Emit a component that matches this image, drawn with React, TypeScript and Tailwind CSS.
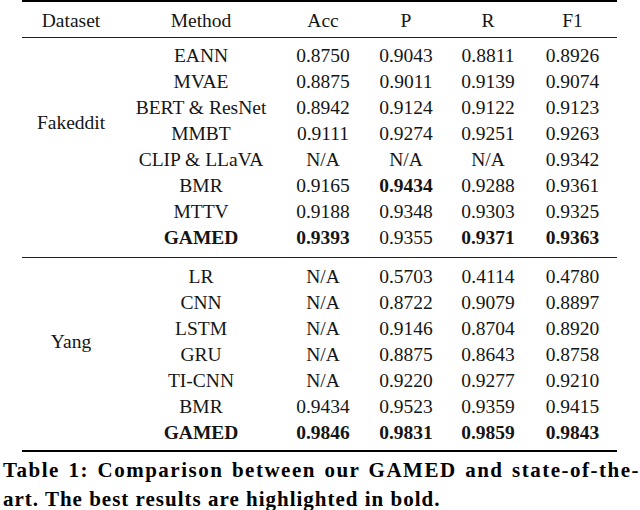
import React from 'react';

type Row = { method: string; vals: string[]; bold: boolean[] };

const fakeddit: Row[] = [
  { method: 'EANN', vals: ['0.8750', '0.9043', '0.8811', '0.8926'], bold: [false, false, false, false] },
  { method: 'MVAE', vals: ['0.8875', '0.9011', '0.9139', '0.9074'], bold: [false, false, false, false] },
  { method: 'BERT & ResNet', vals: ['0.8942', '0.9124', '0.9122', '0.9123'], bold: [false, false, false, false] },
  { method: 'MMBT', vals: ['0.9111', '0.9274', '0.9251', '0.9263'], bold: [false, false, false, false] },
  { method: 'CLIP & LLaVA', vals: ['N/A', 'N/A', 'N/A', '0.9342'], bold: [false, false, false, false] },
  { method: 'BMR', vals: ['0.9165', '0.9434', '0.9288', '0.9361'], bold: [false, true, false, false] },
  { method: 'MTTV', vals: ['0.9188', '0.9348', '0.9303', '0.9325'], bold: [false, false, false, false] },
];

const yang: Row[] = [
  { method: 'LR', vals: ['N/A', '0.5703', '0.4114', '0.4780'], bold: [false, false, false, false] },
  { method: 'CNN', vals: ['N/A', '0.8722', '0.9079', '0.8897'], bold: [false, false, false, false] },
  { method: 'LSTM', vals: ['N/A', '0.9146', '0.8704', '0.8920'], bold: [false, false, false, false] },
  { method: 'GRU', vals: ['N/A', '0.8875', '0.8643', '0.8758'], bold: [false, false, false, false] },
  { method: 'TI-CNN', vals: ['N/A', '0.9220', '0.9277', '0.9210'], bold: [false, false, false, false] },
  { method: 'BMR', vals: ['0.9434', '0.9523', '0.9359', '0.9415'], bold: [false, false, false, false] },
];

const gridCols = 'grid grid-cols-[98px_162px_82px_84px_80px_89px]';

const BodyRow = ({ row, strongMethod }: { row: Row; strongMethod?: boolean }) => (
  <>
    <div className={`col-start-2 h-[26px] text-center ${strongMethod ? 'font-bold' : ''}`}>{row.method}</div>
    {row.vals.map((v, i) => (
      <div key={i} className={`h-[26px] text-center ${row.bold[i] ? 'font-bold' : ''}`}>
        {v}
      </div>
    ))}
  </>
);

const Section = ({
  name,
  rows,
  best,
  offset,
}: {
  name: string;
  rows: Row[];
  best: Row;
  offset: string;
}) => (
  <div className={gridCols}>
    <div className={`col-start-1 row-start-1 text-center ${offset}`} style={{ gridRowEnd: `span ${rows.length + 1}` }}>
      {name}
    </div>
    {rows.map((r) => (
      <BodyRow key={r.method} row={r} />
    ))}
    <BodyRow row={best} strongMethod />
  </div>
);

export default function App() {
  return (
    <div className="w-[640px] h-[510px] bg-white text-[#151515] overflow-hidden [font-family:Liberation_Serif,Times_New_Roman,serif]">
      {/* table */}
      <div className="ml-[22px] w-[595px] text-[19.5px] leading-[26px]">
        <div className="h-[2px] bg-black" />
        <div className={`${gridCols} pt-[6px] pb-[3px]`}>
          <div className="text-center">Dataset</div>
          <div className="text-center">Method</div>
          <div className="text-center">Acc</div>
          <div className="text-center">P</div>
          <div className="text-center">R</div>
          <div className="text-center">F1</div>
        </div>
        <div className="h-px bg-[#222]" />
        <div className="pt-[5px] pb-[6px]">
          <Section
            name="Fakeddit"
            rows={fakeddit}
            offset="pt-[67px]"
            best={{ method: 'GAMED', vals: ['0.9393', '0.9355', '0.9371', '0.9363'], bold: [true, false, true, true] }}
          />
        </div>
        <div className="h-px bg-[#222]" />
        <div className="pt-[6px] pb-[4px]">
          <Section
            name="Yang"
            rows={yang}
            offset="pt-[65px]"
            best={{ method: 'GAMED', vals: ['0.9846', '0.9831', '0.9859', '0.9843'], bold: [true, true, true, true] }}
          />
        </div>
        <div className="h-[2px] bg-black" />
      </div>

      {/* caption */}
      <div className="pl-[3px] pt-[4px] text-[21px] leading-[29px] font-bold text-black">
        <div className="tracking-[1.5px] text-justify [text-align-last:justify]">
          Table 1: Comparison between our GAMED and state-of-the-
        </div>
        <div className="tracking-[1px]">art. The best results are highlighted in bold.</div>
      </div>
    </div>
  );
}
